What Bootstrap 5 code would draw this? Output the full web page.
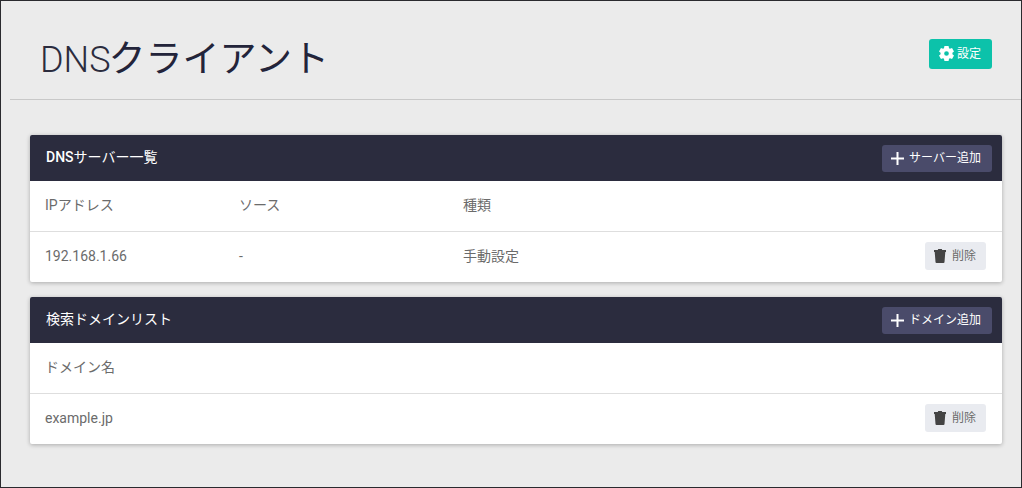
<!DOCTYPE html>
<html lang="ja">
<head>
<meta charset="utf-8">
<title>DNSクライアント</title>
<link href="https://cdn.jsdelivr.net/npm/bootstrap@5.3.0/dist/css/bootstrap.min.css" rel="stylesheet">
<style>
html,body{height:100%;}
body{background:#ebebeb;font-family:Roboto,"Noto Sans CJK JP",sans-serif;color:#6b6b6b;font-size:14px;overflow:hidden;}
.frame{height:488px;border:1px solid #2a2a2e;padding:0 0 0 9px;}
.page-top{height:99px;border-bottom:1px solid #c8c8c8;padding:7px 29px 0 30px;}
.page-name{font-size:36px;font-weight:300;color:#2b2c3e;margin:13px 0 0;line-height:42px;}
.name-jp{font-weight:400;color:#23243a;font-size:37px;margin-left:-2px;}
.btn-gear{background:#0cc2aa;color:#fff;border:0;border-radius:3px;height:30px;width:63px;font-size:12px;padding:0 0 0 10px;}
.btn-gear:hover{background:#0cc2aa;color:#fff;}
.panels{padding:35px 19px 0 20px;}
.panel-box{background:#fff;border-radius:2px;box-shadow:0 1px 4px rgba(0,0,0,.28);margin-bottom:15px;}
.panel-head{height:46px;background:#2b2c3e;color:#fff;padding:0 10px 0 16px;border-radius:2px 2px 0 0;font-size:14px;}
.head-txt{position:relative;top:-1px;}
.head-lat{font-weight:500;}
.btn-add{background:#4a4b6a;color:#fff;border:0;border-radius:3px;height:27px;width:110px;font-size:12px;padding:0 0 0 9px;}
.btn-add:hover{background:#4a4b6a;color:#fff;}
.btn-del{background:#e9ebf0;color:#6b6b6b;border:0;border-radius:3px;height:28px;width:61px;font-size:12px;padding:0 0 0 9px;}
.btn-del:hover{background:#e9ebf0;color:#6b6b6b;}
.line{height:50px;padding:0 16px 0 15px;font-size:14px;}
.line-top{height:51px;border-bottom:1px solid #dedede;}
.line-low{padding-bottom:2px;}
.del-low{margin-bottom:2px;}
.cell-a{width:194px;}
.cell-b{width:224px;}
.ico{flex:none;}
.gap-add{gap:5px;}
.gap-del{gap:6px;}
.gap-gear{gap:3px;}
</style>
</head>
<body>
<div class="frame">
  <div class="page-top d-flex align-items-center justify-content-between">
    <h1 class="page-name">DNS<span class="name-jp">クライアント</span></h1>
    <button class="btn btn-gear d-flex align-items-center gap-gear">
      <svg class="ico" width="15" height="15" viewBox="0 0 16 16"><path fill="#fff" fill-rule="evenodd" d="M5.800 0h4.400l.5 2.300 1 .6 2.200-.8 2.100 3.700-1.700 1.500v1.400l1.700 1.500-2.100 3.700-2.200-.8-1 .6-.5 2.300H5.800l-.5-2.300-1-.6-2.200.8L0 10.200l1.700-1.500V7.300L0 5.800l2.100-3.700 2.200.8 1-.6zM8 5.500a2.500 2.500 0 1 0 0 5 2.500 2.500 0 0 0 0-5z"/></svg>
      <span>設定</span>
    </button>
  </div>
  <div class="panels">
    <div class="panel-box">
      <div class="panel-head d-flex align-items-center justify-content-between">
        <span class="head-txt"><span class="head-lat">DNS</span>サーバー一覧</span>
        <button class="btn btn-add d-flex align-items-center gap-add">
          <svg class="ico" width="13" height="13" viewBox="0 0 13 13"><path fill="#fff" d="M5.500 0h2v5.500H13v2H7.500V13h-2V7.500H0v-2h5.500z"/></svg>
          <span>サーバー追加</span>
        </button>
      </div>
      <div class="line line-top line-low d-flex align-items-center">
        <div class="cell-a">IPアドレス</div><div class="cell-b">ソース</div><div>種類</div>
      </div>
      <div class="line d-flex align-items-center">
        <div class="cell-a line-low">192.168.1.66</div><div class="cell-b line-low">-</div><div class="line-low">手動設定</div>
        <button class="btn btn-del ms-auto d-flex align-items-center gap-del del-low">
          <svg class="ico" width="12" height="14" viewBox="0 0 12 14"><path fill="#444" d="M4.200 0h3.600l.4 1H12v2H11.300L10.500 13a1 1 0 0 1-1 1h-7a1 1 0 0 1-1-1L.7 3H0V1h3.800z"/></svg>
          <span>削除</span>
        </button>
      </div>
    </div>
    <div class="panel-box">
      <div class="panel-head d-flex align-items-center justify-content-between">
        <span class="head-txt">検索ドメインリスト</span>
        <button class="btn btn-add d-flex align-items-center gap-add">
          <svg class="ico" width="13" height="13" viewBox="0 0 13 13"><path fill="#fff" d="M5.500 0h2v5.500H13v2H7.500V13h-2V7.500H0v-2h5.500z"/></svg>
          <span>ドメイン追加</span>
        </button>
      </div>
      <div class="line line-top line-low d-flex align-items-center"><div>ドメイン名</div></div>
      <div class="line d-flex align-items-center">
        <div class="line-low">example.jp</div>
        <button class="btn btn-del ms-auto d-flex align-items-center gap-del del-low">
          <svg class="ico" width="12" height="14" viewBox="0 0 12 14"><path fill="#444" d="M4.200 0h3.600l.4 1H12v2H11.300L10.500 13a1 1 0 0 1-1 1h-7a1 1 0 0 1-1-1L.7 3H0V1h3.800z"/></svg>
          <span>削除</span>
        </button>
      </div>
    </div>
  </div>
</div>
<script src="https://cdn.jsdelivr.net/npm/bootstrap@5.3.0/dist/js/bootstrap.bundle.min.js"></script>
</body>
</html>
